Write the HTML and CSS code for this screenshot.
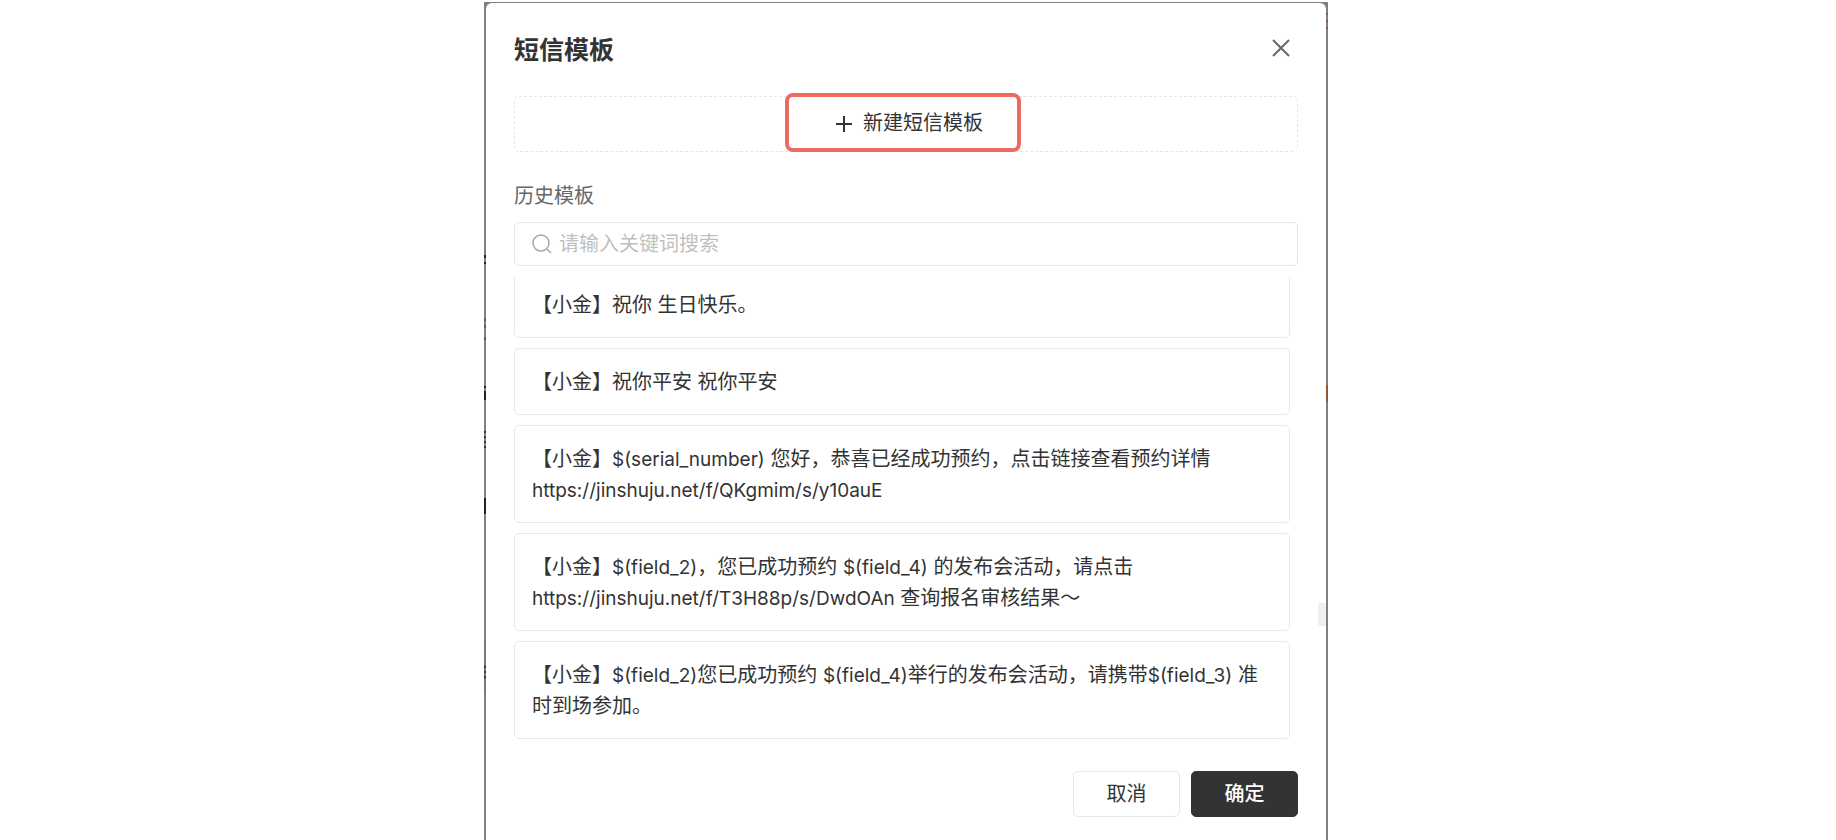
FILE: index.html
```html
<!DOCTYPE html>
<html lang="zh-CN">
<head>
<meta charset="utf-8">
<title>短信模板</title>
<link rel="stylesheet" href="styles.css">
</head>
<body>
<div class="backdrop">
  <section class="dialog" role="dialog" aria-labelledby="dialog-title">
    <header class="dialog-header">
      <h1 class="dialog-title" id="dialog-title">短信模板</h1>
      <button class="close" type="button" aria-label="关闭">
        <svg viewBox="0 0 18 18" width="18" height="18"><path d="M1 1 17 17M17 1 1 17"/></svg>
      </button>
    </header>
    <div class="create">
      <button class="create-button" type="button">
        <svg viewBox="0 0 18 18" width="18" height="18"><path d="M9 1V17M1 9H17"/></svg>
        新建短信模板
      </button>
    </div>
    <label class="history-label" for="keyword">历史模板</label>
    <div class="search">
      <svg viewBox="0 0 20 20" width="20" height="20"><circle cx="9" cy="9" r="8"/><path d="M15 15 19 19"/></svg>
      <input class="search-input" id="keyword" type="text" placeholder="请输入关键词搜索">
    </div>
    <ul class="templates">
      <li class="template">【小金】祝你 生日快乐。</li>
      <li class="template">【小金】祝你平安 祝你平安</li>
      <li class="template">【小金】<span class="token">$(serial_number)</span> 您好，恭喜已经成功预约，点击链接查看预约详情<br><span class="token">https://jinshuju.net/f/QKgmim/s/y10auE</span></li>
      <li class="template">【小金】<span class="token">$(field_2)</span>，您已成功预约 <span class="token">$(field_4)</span> 的发布会活动，请点击<br><span class="token">https://jinshuju.net/f/T3H88p/s/DwdOAn</span> 查询报名审核结果～</li>
      <li class="template">【小金】<span class="token">$(field_2)</span>您已成功预约 <span class="token">$(field_4)</span>举行的发布会活动，请携带<span class="token">$(field_3)</span> 准<br>时到场参加。</li>
    </ul>
    <footer class="dialog-footer">
      <button class="button" type="button">取消</button>
      <button class="button button-primary" type="button">确定</button>
    </footer>
    <span class="scroll-thumb"></span>
  </section>
</div>
</body>
</html>
```

FILE: styles.css
```css
* { box-sizing: border-box; }

body {
  margin: 0;
  padding: 2px 24px 0 0;
  height: 100vh;
  overflow: hidden;
  background: #fff;
  color: #333;
  font: 20px/31px Inter, "Noto Sans CJK SC", sans-serif;
}

button, input { font: inherit; color: inherit; }

svg {
  flex: none;
  fill: none;
  stroke: currentColor;
  stroke-width: 2;
}

/* Dimmed page, visible as a thin edge around the dialog */
.backdrop {
  max-width: 844px;
  min-height: 100%;
  margin: 0 auto;
  padding: 1px 2px 0;
  background:
    linear-gradient(#0000 11px, #8a5637 11px 13px, #0000 13px 18px, #8a5637 18px 20px, #0000 20px 25px, #8a5637 25px 27px, #0000 27px 383px, #96582f 383px 400px, #0000 400px) right / 2px 100% no-repeat,
    linear-gradient(#0000 253px, #222 253px 256px, #0000 256px 260px, #222 260px 262px, #0000 262px 316px, #2f6f7d 316px 319px, #0000 319px 323px, #2f6f7d 323px 326px, #0000 326px 335px, #2f6f7d 335px 338px, #0000 338px 384px, #222 384px 386px, #0000 386px 389px, #222 389px 398px, #0000 398px 429px, #333 429px 431px, #0000 431px 434px, #333 434px 436px, #0000 436px 439px, #333 439px 441px, #0000 441px 444px, #333 444px 446px, #0000 446px 496px, #222 496px 512px, #0000 512px 640px, #6f7a82 640px 664px, #2c333c 664px 666px, #6f7a82 666px 669px, #2c333c 669px 671px, #6f7a82 671px 674px, #2c333c 674px 676px, #6f7a82 676px 690px, #0000 690px) left / 2px 100% no-repeat,
    #808080;
  display: flex;
}

.dialog {
  position: relative;
  flex: 1;
  padding: 29px 28px 0;
  border-radius: 6px 6px 0 0;
  background: #fff;
}

.dialog-header {
  display: flex;
  align-items: flex-start;
  justify-content: space-between;
  margin-bottom: 27px;
}

.dialog-title {
  margin: 0;
  font-size: 25px;
  line-height: 37px;
  font-weight: 600;
}

.close {
  display: flex;
  padding: 7px 8px;
  border: 0;
  background: none;
  color: #666;
}

.create {
  display: flex;
  justify-content: center;
  height: 56px;
  border: 1px dashed #e6e6e6;
  border-radius: 5px;
}

.create-button {
  display: flex;
  align-items: center;
  justify-content: center;
  gap: 10px;
  width: 236px;
  margin: -4px 6px -1px 0;
  padding: 2px 0 0 12px;
  border: 4px solid #ee6a5f;
  border-radius: 8px;
  background: #fff;
}

.history-label {
  display: block;
  margin: 29px 0 10px;
  color: #666;
}

.search {
  display: flex;
  align-items: center;
  gap: 7px;
  height: 44px;
  padding: 0 17px;
  border: 1px solid #e6e6e6;
  border-radius: 5px;
  color: #a6a6a6;
}

.search svg { stroke-width: 1.5; }

.search-input {
  flex: 1;
  min-width: 0;
  padding: 0;
  border: 0;
  outline: 0;
  background: none;
}

.search-input::placeholder { color: #bfbfbf; opacity: 1; }

.templates {
  display: flex;
  flex-direction: column;
  justify-content: flex-end;
  gap: 10px;
  height: 462px;
  margin: 11px 8px 0 0;
  padding: 0;
  overflow: hidden;
  list-style: none;
}

.template {
  flex: none;
  padding: 18px 8px 16px 17px;
  border: 1px solid #e8e8e8;
  border-radius: 5px;
}

.token {
  font-size: 19px;
  line-height: 1;
}

.dialog-footer {
  display: flex;
  justify-content: flex-end;
  gap: 11px;
  padding: 32px 0 24px;
}

.button {
  width: 107px;
  height: 46px;
  padding: 0;
  border: 1px solid #e6e6e6;
  border-radius: 5px;
  background: #fff;
}

.button-primary {
  border-color: #333;
  background: #333;
  color: #fff;
  font-weight: 500;
}

.scroll-thumb {
  position: absolute;
  top: 600px;
  right: 0;
  width: 8px;
  height: 23px;
  border-radius: 3px 0 0 3px;
  background: #efefef;
}
```
